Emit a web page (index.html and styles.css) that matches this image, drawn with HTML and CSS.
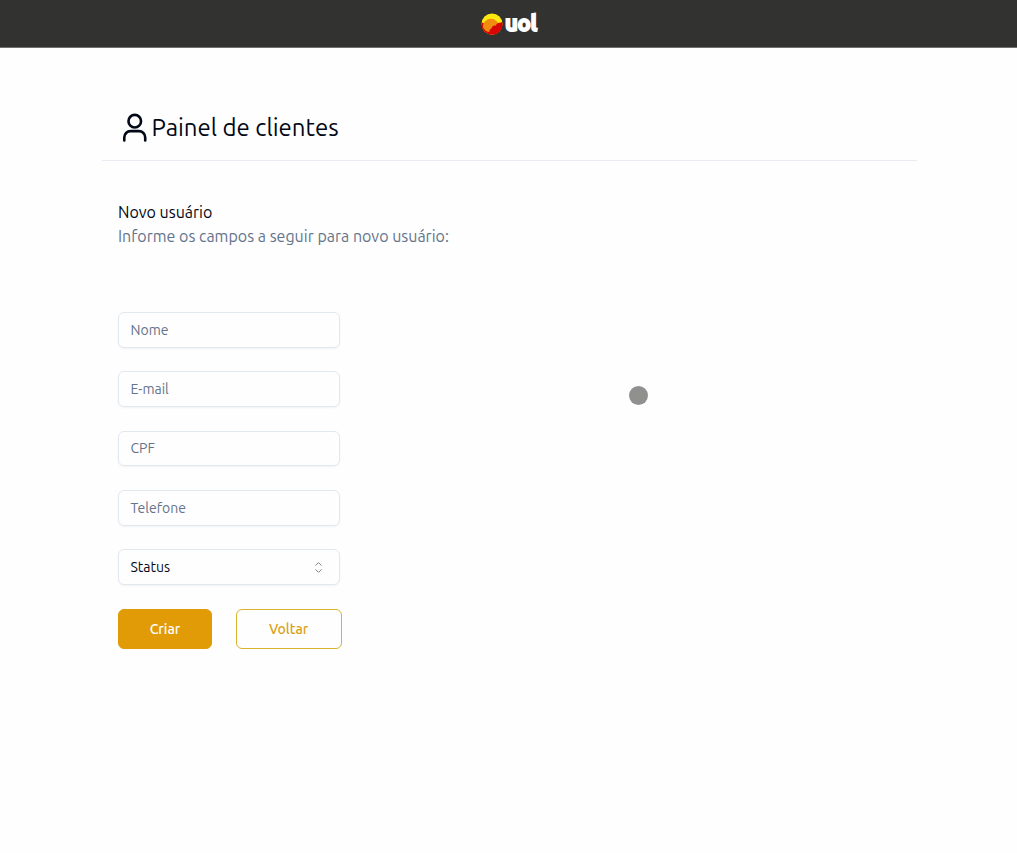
FILE: index.html
```html
<!DOCTYPE html>
<html lang="pt-BR">
<head>
<meta charset="utf-8">
<title>Painel de clientes</title>
<link rel="stylesheet" href="styles.css">
</head>
<body>
<header class="topbar">
  <svg class="logo-mark" viewBox="0 0 22 22">
    <defs><clipPath id="ball"><circle cx="11" cy="11" r="10.5"/></clipPath></defs>
    <g clip-path="url(#ball)">
      <rect width="22" height="22" fill="#fde910"/>
      <path d="M0 9V22H22V8Q20 10.5 17 10L12 15Z" fill="#d90406"/>
      <circle cx="10" cy="14" r="8.2" fill="#f08c10"/>
      <path d="M22 10.5Q16 8.5 15 12.5Q11 12 10.5 15.5Q8 16.5 8.5 19Q3 19 0 10V22H22Z" fill="#d90406"/>
    </g>
  </svg>
  <span class="logo-text">uol</span>
</header>
<main class="page">
  <div class="heading">
    <svg class="user-icon" viewBox="0 0 32 32"><circle cx="16" cy="9.5" r="6"/><path d="M6 28v-3a6 6 0 0 1 6-6h8a6 6 0 0 1 6 6v3"/></svg>
    <h1 class="title">Painel de clientes</h1>
  </div>
  <section class="intro">
    <h2 class="subtitle">Novo usuário</h2>
    <p class="description">Informe os campos a seguir para novo usuário:</p>
  </section>
  <form class="form">
    <div class="field">Nome</div>
    <div class="field">E-mail</div>
    <div class="field">CPF</div>
    <div class="field">Telefone</div>
    <div class="field select">Status
      <svg class="chevrons" viewBox="0 0 15 15"><path d="M4.5 5.6 7.5 2.6l3 3M4.5 9.4l3 3 3-3"/></svg>
    </div>
    <div class="actions">
      <button type="button" class="btn primary">Criar</button>
      <button type="button" class="btn outline">Voltar</button>
    </div>
  </form>
</main>
<div class="pointer"></div>
</body>
</html>
```
FILE: styles.css
```css
* { box-sizing: border-box; }
body {
  margin: 0;
  min-height: 853px;
  background: #fefefe;
  color: #020817;
  font-family: Ubuntu, "Noto Sans", sans-serif;
}
.topbar {
  display: flex;
  justify-content: center;
  height: 48px;
  padding: 13px 0 0 1px;
  background: #323230;
  border-bottom: 1px solid #70706e;
}
.logo-mark { width: 22px; height: 22px; }
.logo-text {
  margin-left: 2px;
  color: #fff;
  font: 700 22px/20px Ubuntu, "Liberation Sans", sans-serif;
  letter-spacing: -0.3px;
  -webkit-text-stroke: 1.9px #fff;
}
.page { width: 815px; margin: 0 0 0 102px; }
.heading {
  display: flex;
  align-items: center;
  height: 113px;
  padding: 47px 16px 0;
  border-bottom: 1px solid #e8ebf1;
}
.user-icon {
  width: 33.5px;
  height: 34px;
  fill: none;
  stroke: #020817;
  stroke-width: 2.5;
  stroke-linecap: round;
}
.title { margin: 0; font-size: 24px; font-weight: 400; line-height: 32px; white-space: nowrap; }
.intro { padding: 39px 16px 0; }
.subtitle, .description { margin: 0; font-size: 16px; font-weight: 400; line-height: 24px; white-space: nowrap; }
.description { color: #64748b; }
.form { display: flex; flex-direction: column; gap: 23.7px; margin: 64px 0 0 16px; }
.field {
  display: flex;
  align-items: center;
  width: 221.5px;
  height: 35.65px;
  padding: 0 11.5px;
  border: 1px solid #e2e8f0;
  border-radius: 6px;
  box-shadow: 0 1px 2px rgb(0 0 0 / 5%);
  color: #64748b;
  font-size: 14px;
  line-height: 20px;
}
.select { justify-content: space-between; color: #020817; }
.chevrons { width: 15px; height: 15px; margin-right: 1px; fill: none; stroke: #7f828a; stroke-width: 1; }
.actions { display: flex; gap: 23.6px; }
.btn {
  height: 40px;
  padding: 1px 0 0;
  border: 1px solid #e09b06;
  border-radius: 6px;
  font: 500 14px/20px Ubuntu, "Noto Sans", sans-serif;
}
.primary { width: 94px; background: #e09b06; color: #fefefe; }
.outline { width: 106px; background: #fefefe; border-color: #d9b32f; color: #dc9f16; }
.pointer {
  position: absolute;
  left: 629px;
  top: 386px;
  width: 19px;
  height: 19px;
  border-radius: 50%;
  background: #90908f;
}
```
